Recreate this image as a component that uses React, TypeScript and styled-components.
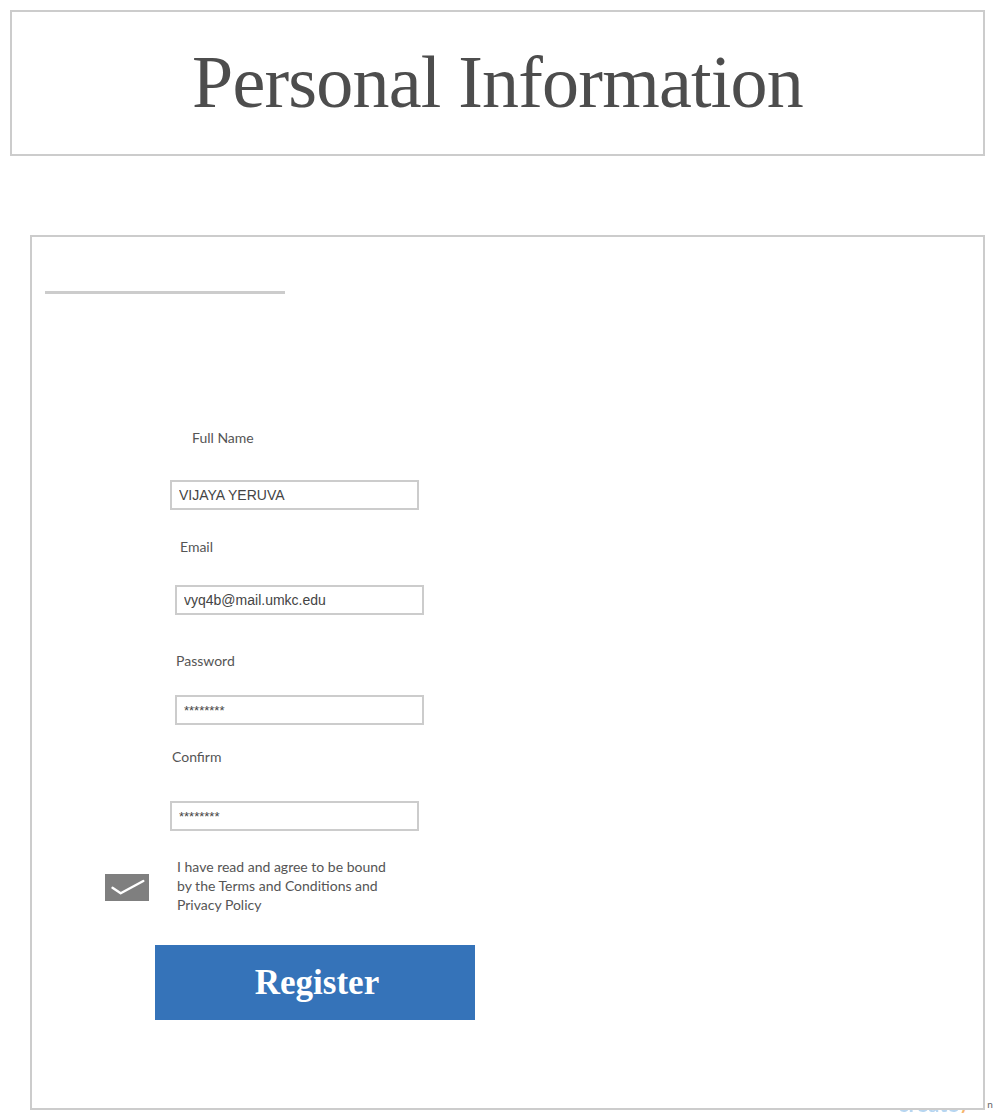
import React from "react";
import styled, { createGlobalStyle } from "styled-components";

const GlobalStyle = createGlobalStyle`
  html, body {
    margin: 0;
    padding: 0;
    background: #ffffff;
  }
  * { box-sizing: border-box; }
`;

const Page = styled.div`
  position: relative;
  padding: 10px 10px 0 10px;
  width: 995px;
  height: 1120px;
  overflow: hidden;
`;

const Header = styled.header`
  height: 146px;
  border: 2px solid #cccccc;
  display: flex;
  align-items: center;
  justify-content: center;
  padding-bottom: 2px;
`;

const Title = styled.h1`
  margin: 0;
  font-family: "Liberation Serif", "Times New Roman", serif;
  font-weight: 400;
  font-size: 74px;
  line-height: 1;
  letter-spacing: -0.8px;
  color: #4d4d4d;
`;

const Card = styled.main`
  position: relative;
  z-index: 1;
  background: #ffffff;
  margin: 79px 0 0 20px;
  width: 955px;
  height: 875px;
  border: 2px solid #cccccc;
  display: flex;
  flex-direction: column;
  align-items: flex-start;
`;

const Rule = styled.div`
  margin: 54px 0 0 13px;
  width: 240px;
  height: 3px;
  background: #cccccc;
`;

const Label = styled.label<{ $x: number; $top: number }>`
  display: block;
  margin: ${(p) => p.$top}px 0 0 ${(p) => p.$x}px;
  font-family: Lato, "Liberation Sans", sans-serif;
  font-size: 14px;
  line-height: 16px;
  color: #555555;
`;

const TextInput = styled.input<{ $x: number; $top: number; $masked?: boolean }>`
  display: block;
  margin: ${(p) => p.$top}px 0 0 ${(p) => p.$x}px;
  width: 249px;
  height: 30px;
  border: 2px solid #cccccc;
  border-radius: 0;
  padding: 0 0 0 7px;
  font-family: "Liberation Sans", Arial, sans-serif;
  font-size: ${(p) => (p.$masked ? 13 : 14)}px;
  color: #444444;
  background: #ffffff;
  outline: none;
`;

const TermsRow = styled.div`
  display: flex;
  align-items: flex-start;
  gap: 28px;
  margin: 26px 0 0 73px;
`;

const CheckBox = styled.span`
  display: block;
  margin-top: 17px;
  width: 44px;
  height: 27px;
  background: #7f7f7f;
`;

const Terms = styled.p`
  margin: 0;
  font-family: Lato, "Liberation Sans", sans-serif;
  font-size: 14px;
  line-height: 19px;
  color: #555555;
`;

const RegisterButton = styled.button`
  margin: 31px 0 0 123px;
  width: 320px;
  height: 75px;
  border: none;
  border-radius: 0;
  background: #3573b9;
  color: #ffffff;
  font-family: "Liberation Serif", "Times New Roman", serif;
  font-weight: 700;
  font-size: 35px;
  padding: 0 0 0 4px;
  cursor: pointer;
`;

const Watermark = styled.div`
  position: absolute;
  left: 898px;
  top: 1090px;
  display: flex;
  align-items: flex-start;
  font-family: Lato, "Liberation Sans", sans-serif;
  white-space: nowrap;
`;

const MarkText = styled.span`
  font-size: 22px;
  font-weight: 700;
  color: #b7d6f1;
  filter: blur(0.6px);
`;

const MarkSlash = styled.span`
  font-size: 22px;
  font-weight: 700;
  color: #f6b46e;
  margin-left: 2px;
`;

const MarkTiny = styled.span`
  font-size: 10px;
  color: #666666;
  margin: 8px 0 0 16px;
  position: relative;
  z-index: 2;
`;

const fields = [
  { label: "Full Name", value: "VIJAYA YERUVA", lx: 160, lt: 136, ix: 138, it: 34, masked: false },
  { label: "Email", value: "vyq4b@mail.umkc.edu", lx: 148, lt: 29, ix: 143, it: 30, masked: false },
  { label: "Password", value: "********", lx: 144, lt: 38, ix: 143, it: 26, masked: true },
  { label: "Confirm", value: "********", lx: 140, lt: 24, ix: 138, it: 36, masked: true },
];

export default function App() {
  return (
    <>
      <GlobalStyle />
      <Page>
        <Header>
          <Title>Personal Information</Title>
        </Header>
        <Card>
          <Rule />
          {fields.map((f) => (
            <React.Fragment key={f.label}>
              <Label $x={f.lx} $top={f.lt}>
                {f.label}
              </Label>
              <TextInput
                $x={f.ix}
                $top={f.it}
                $masked={f.masked}
                type="text"
                defaultValue={f.value}
                readOnly
              />
            </React.Fragment>
          ))}
          <TermsRow>
            <CheckBox>
              <svg width="44" height="27" viewBox="0 0 44 27">
                <polyline
                  points="7.5,13.8 15.7,19.2 38.3,7"
                  fill="none"
                  stroke="#ffffff"
                  strokeWidth="2.4"
                  strokeLinecap="round"
                  strokeLinejoin="round"
                />
              </svg>
            </CheckBox>
            <Terms>
              I have read and agree to be bound
              <br />
              by the Terms and Conditions and
              <br />
              Privacy Policy
            </Terms>
          </TermsRow>
          <RegisterButton type="button">Register</RegisterButton>
        </Card>
        <Watermark>
          <MarkText>create</MarkText>
          <MarkSlash>/</MarkSlash>
          <MarkTiny>n</MarkTiny>
        </Watermark>
      </Page>
    </>
  );
}
